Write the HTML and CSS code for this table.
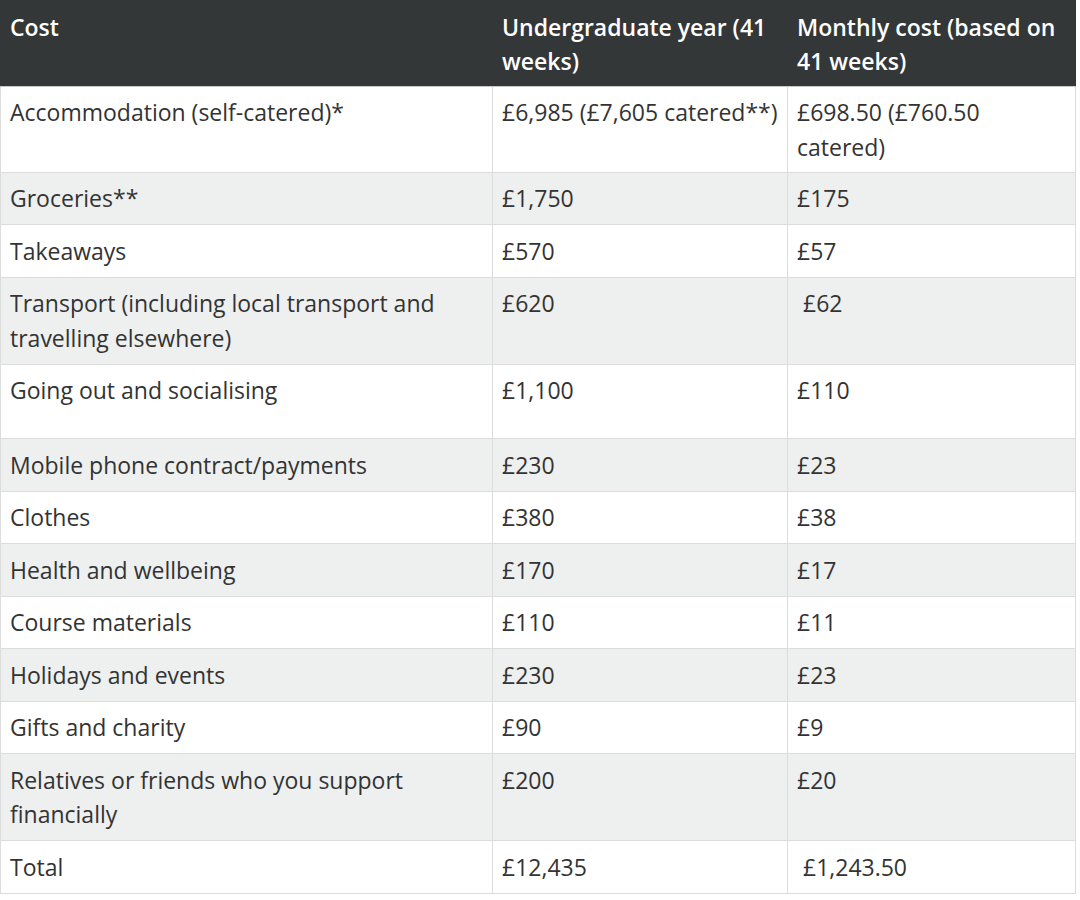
FILE: index.html
```html
<!DOCTYPE html>
<html lang="en">
<head>
<meta charset="utf-8">
<link rel="stylesheet" href="styles.css">
<title>Costs</title>
</head>
<body>
<table class="costs">
  <colgroup>
    <col class="c1"><col class="c2"><col class="c3">
  </colgroup>
  <thead>
    <tr><th>Cost</th><th>Undergraduate year (41 weeks)</th><th>Monthly cost (based on 41 weeks)</th></tr>
  </thead>
  <tbody>
    <tr class="first"><td>Accommodation (self-catered)*</td><td>£6,985 (£7,605 catered**)</td><td>£698.50 (£760.50 catered)</td></tr>
    <tr><td>Groceries**</td><td>£1,750</td><td>£175</td></tr>
    <tr><td>Takeaways</td><td>£570</td><td>£57</td></tr>
    <tr><td>Transport (including local transport and travelling elsewhere)</td><td>£620</td><td>&nbsp;£62</td></tr>
    <tr class="tall"><td>Going out and socialising</td><td>£1,100</td><td>£110</td></tr>
    <tr><td>Mobile phone contract/payments</td><td>£230</td><td>£23</td></tr>
    <tr><td>Clothes</td><td>£380</td><td>£38</td></tr>
    <tr><td>Health and wellbeing</td><td>£170</td><td>£17</td></tr>
    <tr><td>Course materials</td><td>£110</td><td>£11</td></tr>
    <tr><td>Holidays and events</td><td>£230</td><td>£23</td></tr>
    <tr><td>Gifts and charity</td><td>£90</td><td>£9</td></tr>
    <tr><td>Relatives or friends who you support financially</td><td>£200</td><td>£20</td></tr>
    <tr><td>Total</td><td>£12,435</td><td>&nbsp;£1,243.50</td></tr>
  </tbody>
</table>
</body>
</html>
```
FILE: styles.css
```css
html, body {
  margin: 0;
  padding: 0;
  background: #ffffff;
}
body {
  font-family: "Open Sans", "Noto Sans", sans-serif;
  font-size: 23px;
  color: #333333;
}
.costs {
  width: 1075px;
  border-collapse: collapse;
  table-layout: fixed;
}
.c1 { width: 492px; }
.c2 { width: 295px; }
.c3 { width: 288px; }
.costs th,
.costs td {
  text-align: left;
  vertical-align: top;
  padding: 8.5px 8px 8.5px 9px;
  line-height: 34.5px;
  border: 1px solid #dcdcdc;
}
.costs th {
  background: #333738;
  color: #ffffff;
  font-weight: 600;
  padding-top: 8.5px;
  padding-bottom: 7px;
  border-color: #333738;
  border-bottom-color: #c8c8c8;
}
.costs td {
  font-weight: 400;
}
.costs tr.first td {
  padding-top: 8.5px;
  padding-bottom: 7.5px;
}
.costs tbody tr:nth-child(even) td {
  background: #eeefef;
}
.costs tr.tall td {
  padding-bottom: 30.5px;
}
```
